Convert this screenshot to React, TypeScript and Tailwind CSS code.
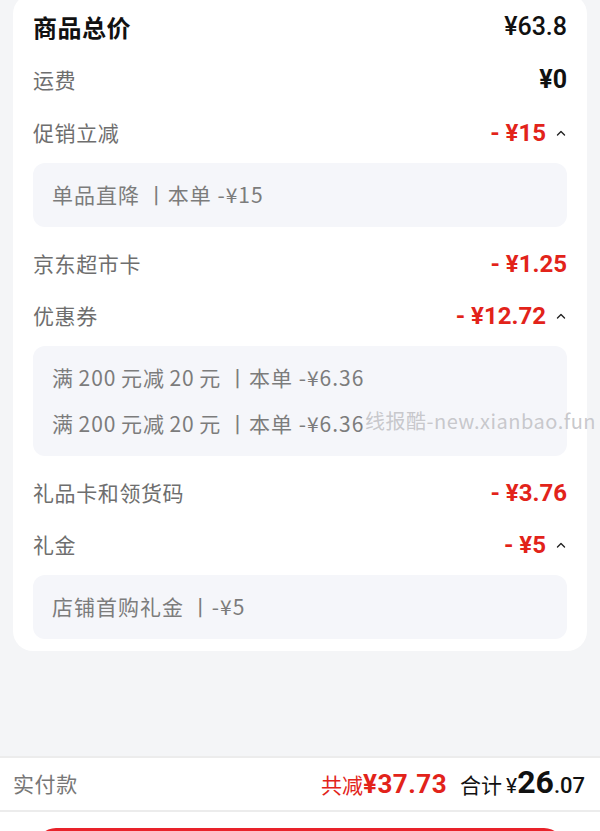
import React from "react";

const cjk = '"Noto Sans CJK SC", "Noto Sans", sans-serif';
const num = 'Roboto, "Noto Sans CJK SC", sans-serif';

function Caret() {
  return (
    <svg width="10" height="8" viewBox="0 0 10 8" className="ml-[10px] mr-[1px]">
      <polyline points="1.5,6 5,2.5 8.5,6" fill="none" stroke="#222" strokeWidth="1.4" strokeLinecap="round" strokeLinejoin="round" />
    </svg>
  );
}

function Row({ label, value, red, open, tall }: { label: string; value: string; red?: boolean; open?: boolean; tall?: boolean }) {
  return (
    <div className={`flex items-center justify-between ${tall ? "h-[53px]" : "h-[52px]"}`}>
      <span className="text-[21px] tracking-[0.6px] text-[#6e6e6e]">{label}</span>
      <span className="flex items-center">
        <span
          className={`text-[24px] font-bold ${red ? "text-[#e2231a]" : "text-[#1a1a1a]"}`}
          style={{ fontFamily: num }}
        >
          {value}
        </span>
        {open && <Caret />}
      </span>
    </div>
  );
}

function Detail({ lines, last }: { lines: string[]; last?: boolean }) {
  return (
    <div className={`bg-[#f5f6fa] rounded-[12px] px-[19px] py-[9px] mt-[4px] ${last ? "" : "mb-[11px]"}`}>
      {lines.map((l, i) => (
        <div key={i} className="h-[46px] flex items-center text-[21px] tracking-[1px] text-[#7c7c7c] whitespace-pre">
          {l}
        </div>
      ))}
    </div>
  );
}

const coupon = "满\u2006200\u2006元减\u200620\u2006元 丨本单 -¥6.36";

export default function App() {
  return (
    <div className="relative min-h-[831px] bg-[#f4f5f7] overflow-hidden" style={{ fontFamily: cjk }}>
      <div className="mx-[13px] -mt-[6px] pt-[6px] bg-white rounded-[20px] px-[20px] pb-[12px]">
        <div className="flex items-center justify-between h-[53px]">
          <span className="text-[24px] font-bold text-[#111] tracking-[0.5px]">商品总价</span>
          <span className="text-[25px] font-medium text-[#111]" style={{ fontFamily: num }}>¥63.8</span>
        </div>
        <div className="h-[53px] flex items-center justify-between">
          <span className="text-[21px] tracking-[0.6px] text-[#6e6e6e]">运费</span>
          <span className="text-[25px] font-bold text-[#111]" style={{ fontFamily: num }}>¥0</span>
        </div>
        <Row label="促销立减" value="- ¥15" red open tall />
        <Detail lines={["单品直降 丨本单 -¥15"]} />
        <Row label="京东超市卡" value="- ¥1.25" red />
        <Row label="优惠券" value="- ¥12.72" red open />
        <Detail lines={[coupon, coupon]} />
        <Row label="礼品卡和领货码" value="- ¥3.76" red />
        <Row label="礼金" value="- ¥5" red open />
        <Detail lines={["店铺首购礼金 丨-¥5"]} last />
      </div>

      <div className="absolute left-0 right-0 top-[756px]">
        <div className="h-[2px] bg-[#ececec]" />
        <div className="bg-white h-[52px] flex items-center justify-between pl-[13px] pr-[15px]">
          <span className="text-[21px] tracking-[0.6px] text-[#777]">实付款</span>
          <span className="flex items-baseline">
            <span className="text-[21px] text-[#e2231a]">共减</span>
            <span className="text-[26px] font-bold text-[#e2231a] tracking-[0.5px]" style={{ fontFamily: num }}>¥37.73</span>
            <span className="text-[21px] text-[#111] ml-[13px]">合计</span>
            <span className="text-[21px] text-[#111] ml-[4px]" style={{ fontFamily: num }}>¥</span>
            <span className="text-[32px] font-bold text-[#111] leading-none" style={{ fontFamily: num }}>26</span>
            <span className="text-[22px] font-medium text-[#111]" style={{ fontFamily: num }}>.07</span>
          </span>
        </div>
        <div className="h-[2px] bg-[#ececec]" />
        <div className="bg-white h-[40px] px-[36px] pt-[16px]">
          <div className="h-[40px] rounded-full bg-[#e8222a]" />
        </div>
      </div>

      <div className="absolute left-[365px] top-[406px] text-[20px] tracking-[0.5px] text-[#c2c2c6]/90 whitespace-nowrap">线报酷-new.xianbao.fun</div>
    </div>
  );
}
